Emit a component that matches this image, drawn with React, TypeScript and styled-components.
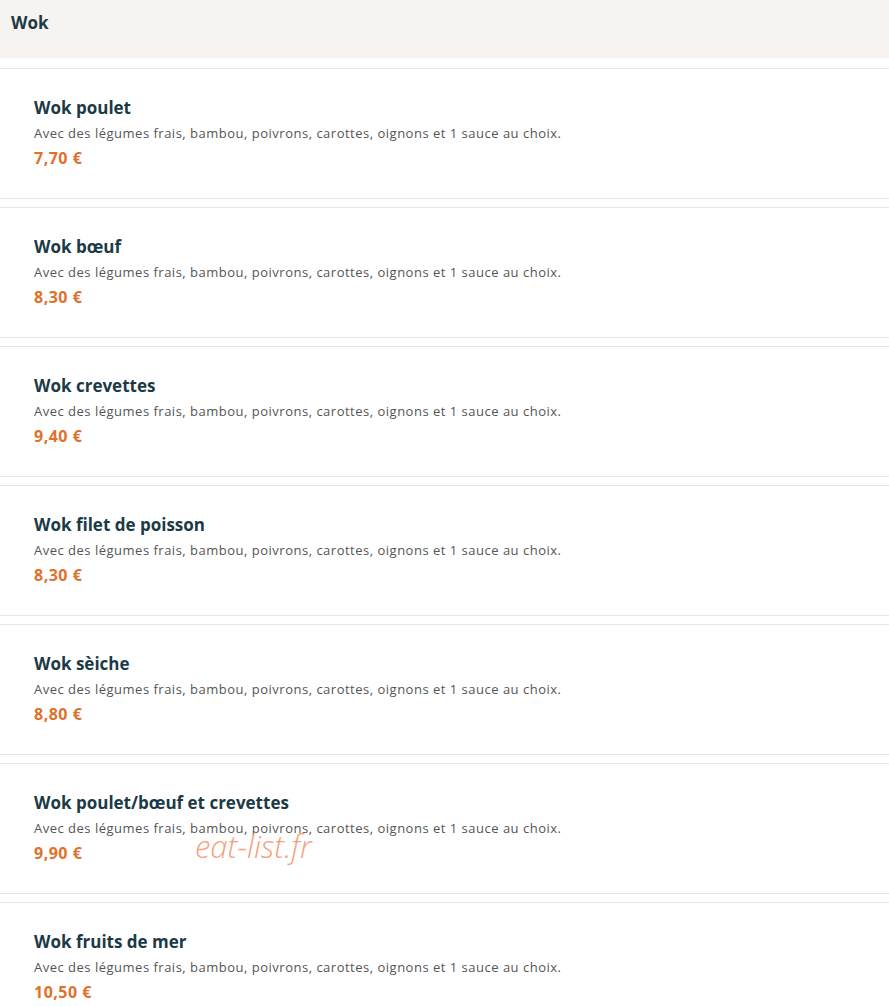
import React from 'react';
import styled, { createGlobalStyle } from 'styled-components';

const GlobalStyle = createGlobalStyle`
  body {
    margin: 0;
    background: #ffffff;
    font-family: "Open Sans", "Liberation Sans", sans-serif;
  }
`;

const Page = styled.div`
  position: relative;
  width: 889px;
`;

const CategoryBar = styled.header`
  height: 58px;
  background: #f7f3f0;
  padding: 14px 0 0 11px;
  box-sizing: border-box;
`;

const CategoryTitle = styled.h2`
  margin: 0;
  font-size: 17px;
  line-height: 18px;
  font-weight: 700;
  color: #1b3a45;
`;

const List = styled.div`
  display: flex;
  flex-direction: column;
  gap: 8px;
  padding-top: 10px;
`;

const Dish = styled.article`
  height: 131px;
  box-sizing: border-box;
  border-top: 1px solid #e6e6e6;
  border-bottom: 1px solid #e6e6e6;
  padding: 28px 34px 0;
  display: flex;
  flex-direction: column;
`;

const DishName = styled.h3`
  margin: 0;
  font-size: 17px;
  line-height: 22px;
  font-weight: 700;
  color: #1b3a45;
`;

const DishText = styled.p`
  margin: 5px 0 0;
  font-size: 13px;
  line-height: 18px;
  letter-spacing: 0.5px;
  color: #555555;
`;

const Price = styled.span`
  margin-top: 6px;
  font-size: 16px;
  line-height: 20px;
  font-weight: 700;
  letter-spacing: 0.5px;
  color: #e0702a;
`;

const Watermark = styled.span`
  position: absolute;
  left: 195px;
  top: 825px;
  font-size: 31px;
  font-style: italic;
  font-weight: 300;
  color: #f4a27d;
  pointer-events: none;
`;

const desc = 'Avec des légumes frais, bambou, poivrons, carottes, oignons et 1 sauce au choix.';

const dishes = [
  { name: 'Wok poulet', price: '7,70 €' },
  { name: 'Wok bœuf', price: '8,30 €' },
  { name: 'Wok crevettes', price: '9,40 €' },
  { name: 'Wok filet de poisson', price: '8,30 €' },
  { name: 'Wok sèiche', price: '8,80 €' },
  { name: 'Wok poulet/bœuf et crevettes', price: '9,90 €' },
  { name: 'Wok fruits de mer', price: '10,50 €' },
];

export default function App() {
  return (
    <Page>
      <GlobalStyle />
      <CategoryBar>
        <CategoryTitle>Wok</CategoryTitle>
      </CategoryBar>
      <List>
        {dishes.map((d) => (
          <Dish key={d.name}>
            <DishName>{d.name}</DishName>
            <DishText>{desc}</DishText>
            <Price>{d.price}</Price>
          </Dish>
        ))}
      </List>
      <Watermark>eat-list.fr</Watermark>
    </Page>
  );
}
